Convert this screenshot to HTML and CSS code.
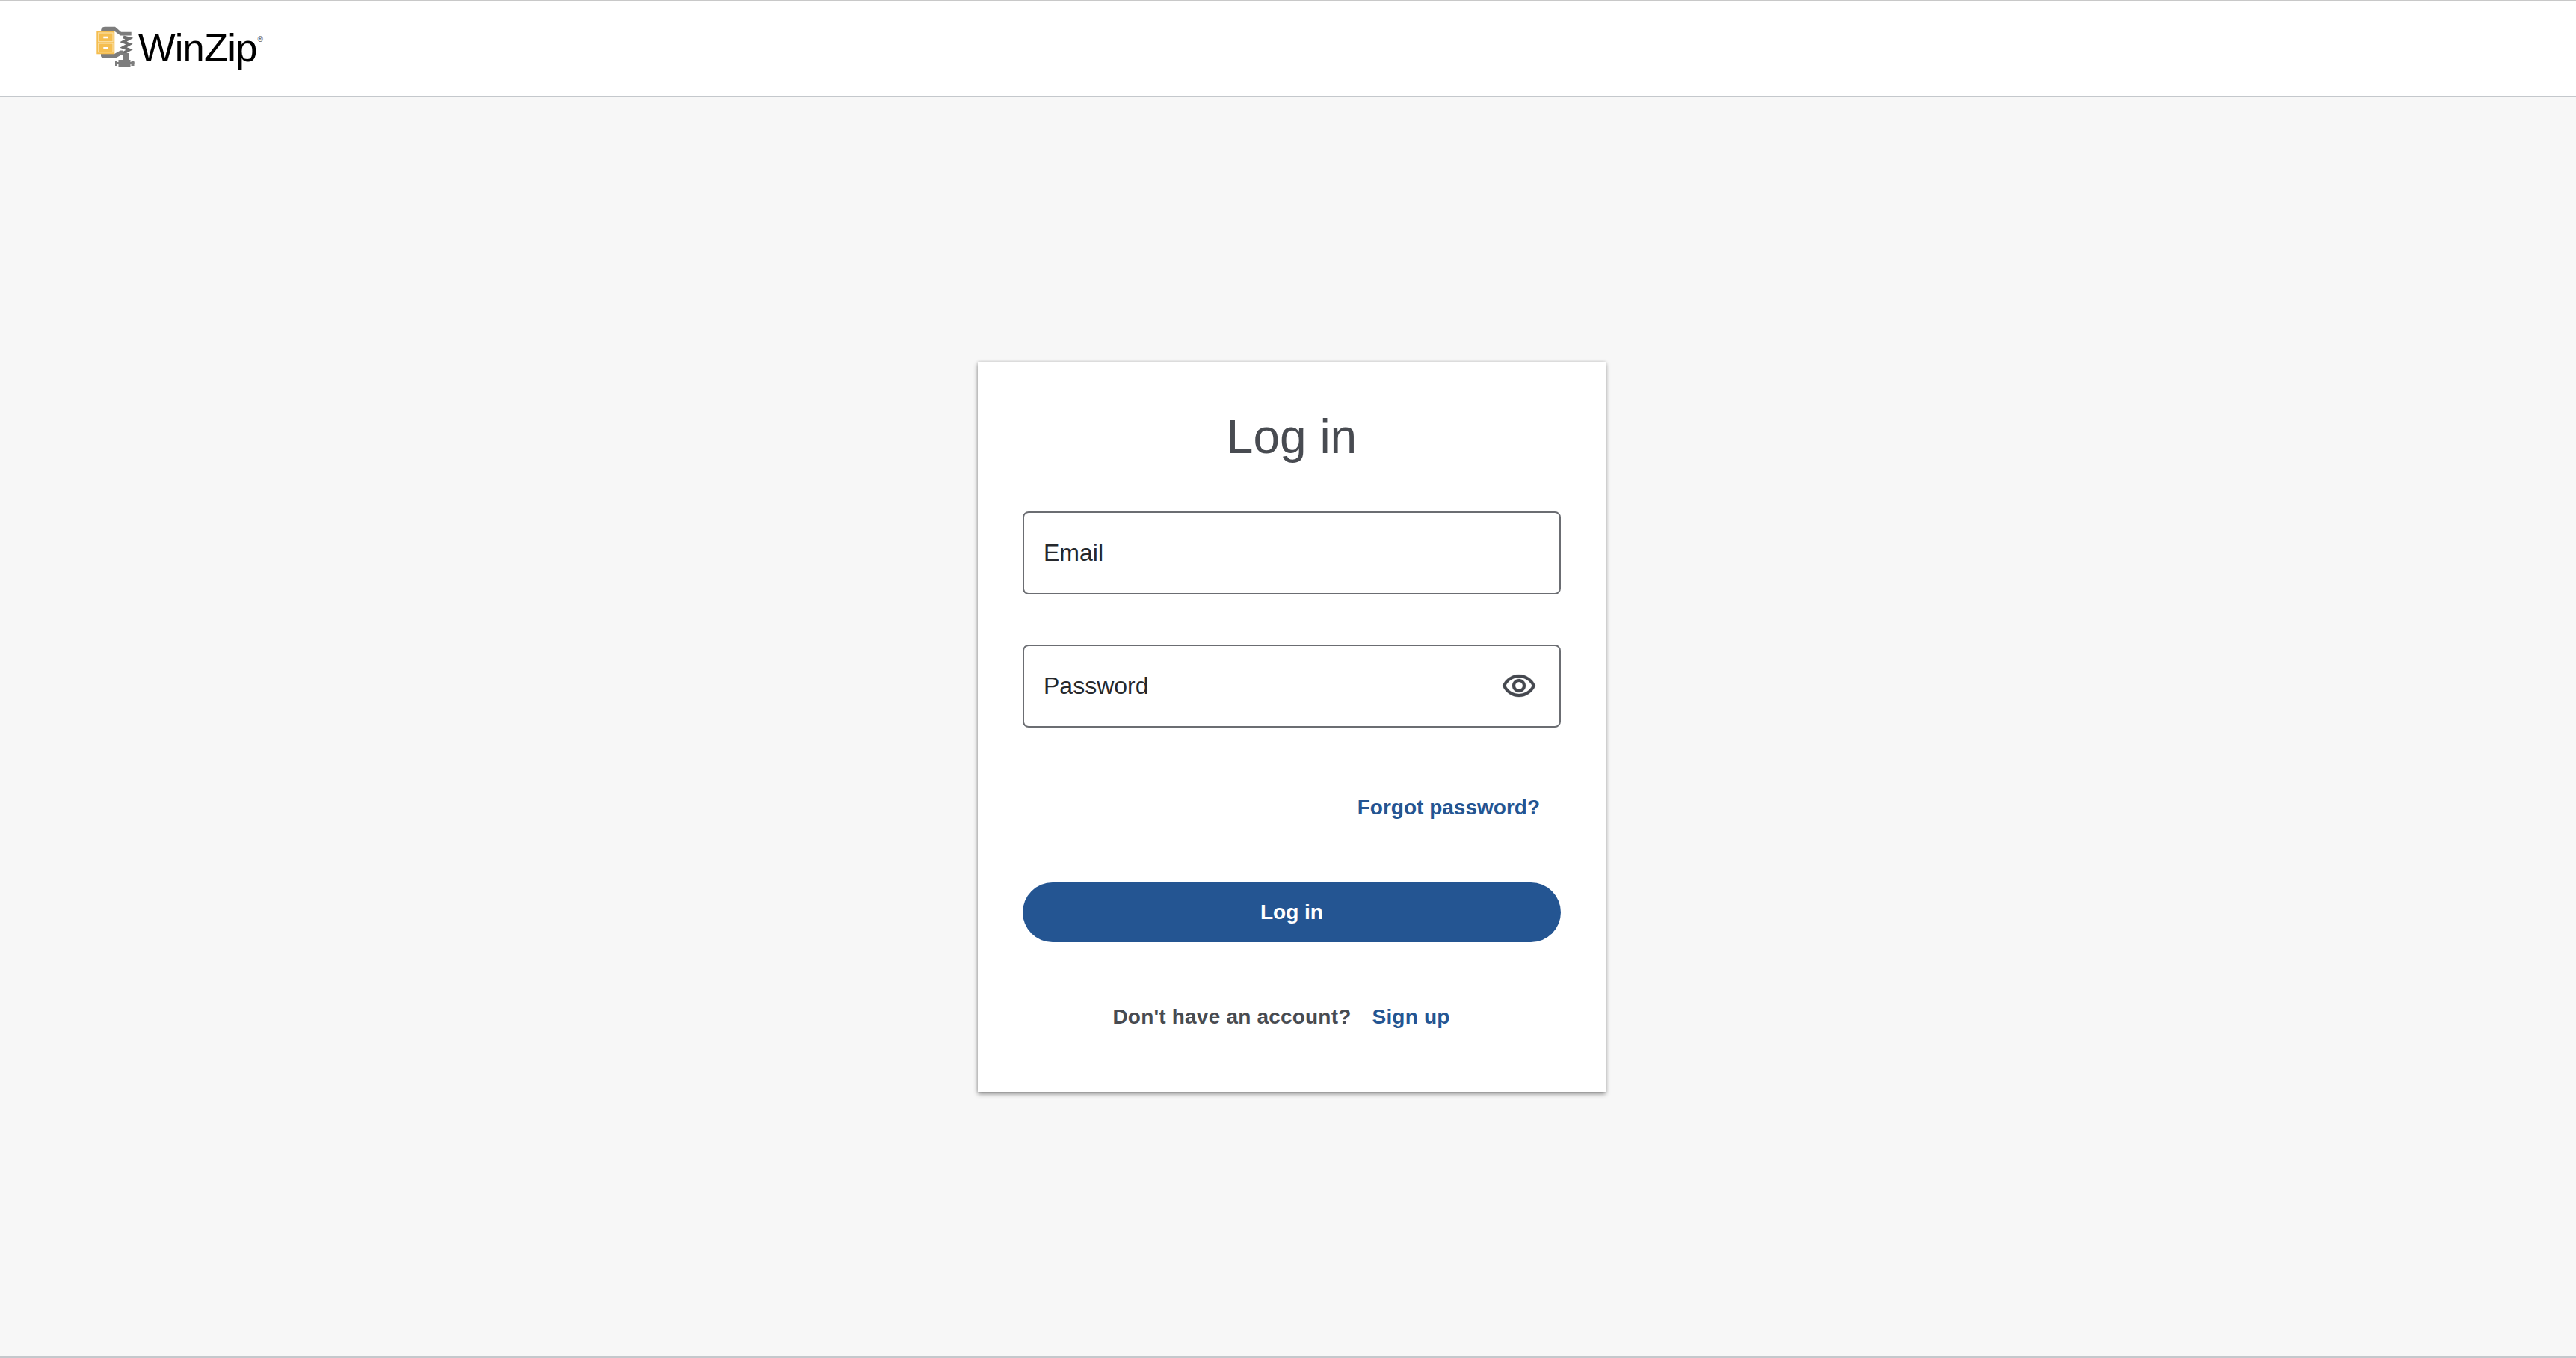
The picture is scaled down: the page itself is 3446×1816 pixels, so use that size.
FILE: index.html
```html
<!DOCTYPE html>
<html lang="en">
<head>
<meta charset="utf-8">
<title>WinZip - Log in</title>
<link rel="stylesheet" href="styles.css">
</head>
<body>
<header class="topbar">
  <a class="brand" href="#">
    <svg class="brand-icon" viewBox="0 0 60 60" aria-hidden="true">
      <path class="clamp" d="M10 9 Q10 2.7 15 2.7 H29 L37 9.7 H50.7 V14.5 H36 L28 8.5 Z"/>
      <path class="clamp" d="M10 39 H28 L36 34.5 H40 V40 H38 L29 45 H14 Q11 45 10 42 Z"/>
      <path class="screw" d="M40 16.5 L48 18.5 L40 23 L48 26 L40 30.5 L48 33.5 L40 38"/>
      <rect class="clamp" x="39" y="38" width="9" height="10"/>
      <rect class="clamp" x="29" y="50" width="25.5" height="3"/>
      <rect class="clamp" x="33.5" y="47" width="16" height="9"/>
      <rect class="clamp" x="29" y="48.5" width="3" height="6.5"/>
      <rect class="clamp" x="50.5" y="48.5" width="4" height="6.5"/>
      <rect class="folder" x="4.3" y="8.3" width="24" height="31"/>
      <rect class="drawer" x="6.7" y="11" width="19.3" height="11.7"/>
      <rect class="drawer" x="6.7" y="25" width="19.3" height="11.7"/>
      <rect class="handle" x="13.3" y="15.7" width="6.7" height="2.6"/>
      <rect class="handle" x="13.3" y="30" width="6.7" height="2.7"/>
    </svg>
    <span class="wordmark">WinZip</span><span class="reg">®</span>
  </a>
</header>
<main class="page">
  <section class="card">
    <h1 class="title">Log in</h1>
    <label class="field field-email"><span>Email</span></label>
    <label class="field field-password">
      <span>Password</span>
      <svg class="eye" viewBox="0 0 24 24" aria-hidden="true"><path d="M12 6c3.79 0 7.17 2.13 8.82 5.5C19.17 14.87 15.79 17 12 17s-7.17-2.13-8.82-5.5C4.83 8.13 8.21 6 12 6m0-2C7 4 2.73 7.11 1 11.5 2.73 15.89 7 19 12 19s9.27-3.11 11-7.5C21.27 7.11 17 4 12 4zm0 5c1.38 0 2.5 1.12 2.5 2.5S13.38 14 12 14s-2.5-1.12-2.5-2.5S10.62 9 12 9m0-2c-2.48 0-4.5 2.02-4.5 4.5S9.52 16 12 16s4.5-2.02 4.5-4.5S14.48 7 12 7z"/></svg>
    </label>
    <div class="forgot"><a class="link" href="#">Forgot password?</a></div>
    <button class="submit" type="button">Log in</button>
    <p class="signup"><span>Don't have an account?</span><a class="link" href="#">Sign up</a></p>
  </section>
</main>
</body>
</html>
```

FILE: styles.css
```css
* { box-sizing: border-box; }
html, body { height: 100%; }
body {
  margin: 0;
  display: flex;
  flex-direction: column;
  background: #f7f7f7;
  font-family: "Liberation Sans", Arial, sans-serif;
  border-bottom: 3px solid #c4c8cc;
}
.topbar {
  height: 130px;
  flex: none;
  display: flex;
  align-items: flex-start;
  background: #fff;
  border-top: 2px solid #c8c8c8;
  border-bottom: 2px solid #c4c8cc;
}
.brand {
  display: flex;
  align-items: flex-start;
  margin-left: 125px;
  margin-top: 31px;
  color: #000;
  text-decoration: none;
}
.brand-icon { width: 60px; height: 60px; flex: none; }
.clamp { fill: #7d7d7d; }
.screw { fill: none; stroke: #6f6f6f; stroke-width: 4; }
.folder { fill: #f5be50; }
.drawer { fill: #f5be50; stroke: #fbe0a6; stroke-width: 1.2; }
.handle { fill: #fff; }
.wordmark {
  font-size: 52.5px;
  line-height: 60px;
  letter-spacing: -0.8px;
  margin-top: 1px;
}
.reg { font-size: 10px; line-height: 12px; margin-top: 14px; margin-left: 1px; color: #444; }
.page {
  flex: 1;
  display: flex;
  align-items: center;
  justify-content: center;
  padding: 1px 0 0 10px;
}
.card {
  width: 840px;
  height: 976px;
  background: #fff;
  padding: 62px 60px 0;
  display: flex;
  flex-direction: column;
  box-shadow: 0 3px 6px rgba(0, 0, 0, 0.4), 0 0 4px rgba(0, 0, 0, 0.15);
}
.title {
  margin: 0 0 62px;
  font-size: 64px;
  line-height: 76px;
  font-weight: 400;
  text-align: center;
  color: #484b51;
}
.field {
  height: 111px;
  flex: none;
  display: flex;
  align-items: center;
  justify-content: space-between;
  padding: 0 30px 0 26px;
  border: 2px solid #6b6d72;
  border-radius: 8px;
  font-size: 32px;
  color: #26282c;
}
.field-email { margin-bottom: 67px; }
.eye { width: 48px; height: 48px; fill: #45484f; stroke: #45484f; stroke-width: 0.15; flex: none; }
.forgot {
  margin-top: 87px;
  padding-right: 28px;
  text-align: right;
  font-size: 28px;
  line-height: 40px;
}
.link {
  font-size: 28px;
  font-weight: 700;
  color: #245592;
  text-decoration: none;
}
.submit {
  margin-top: 80px;
  height: 80px;
  flex: none;
  border: 0;
  border-radius: 40px;
  background: #245592;
  color: #fff;
  font: 700 28px "Liberation Sans", Arial, sans-serif;
}
.signup {
  margin: 80px 0 0;
  padding-right: 28px;
  display: flex;
  justify-content: center;
  gap: 28px;
  font-size: 28px;
  line-height: 40px;
  font-weight: 700;
  letter-spacing: 0.2px;
  color: #484b51;
}
```
